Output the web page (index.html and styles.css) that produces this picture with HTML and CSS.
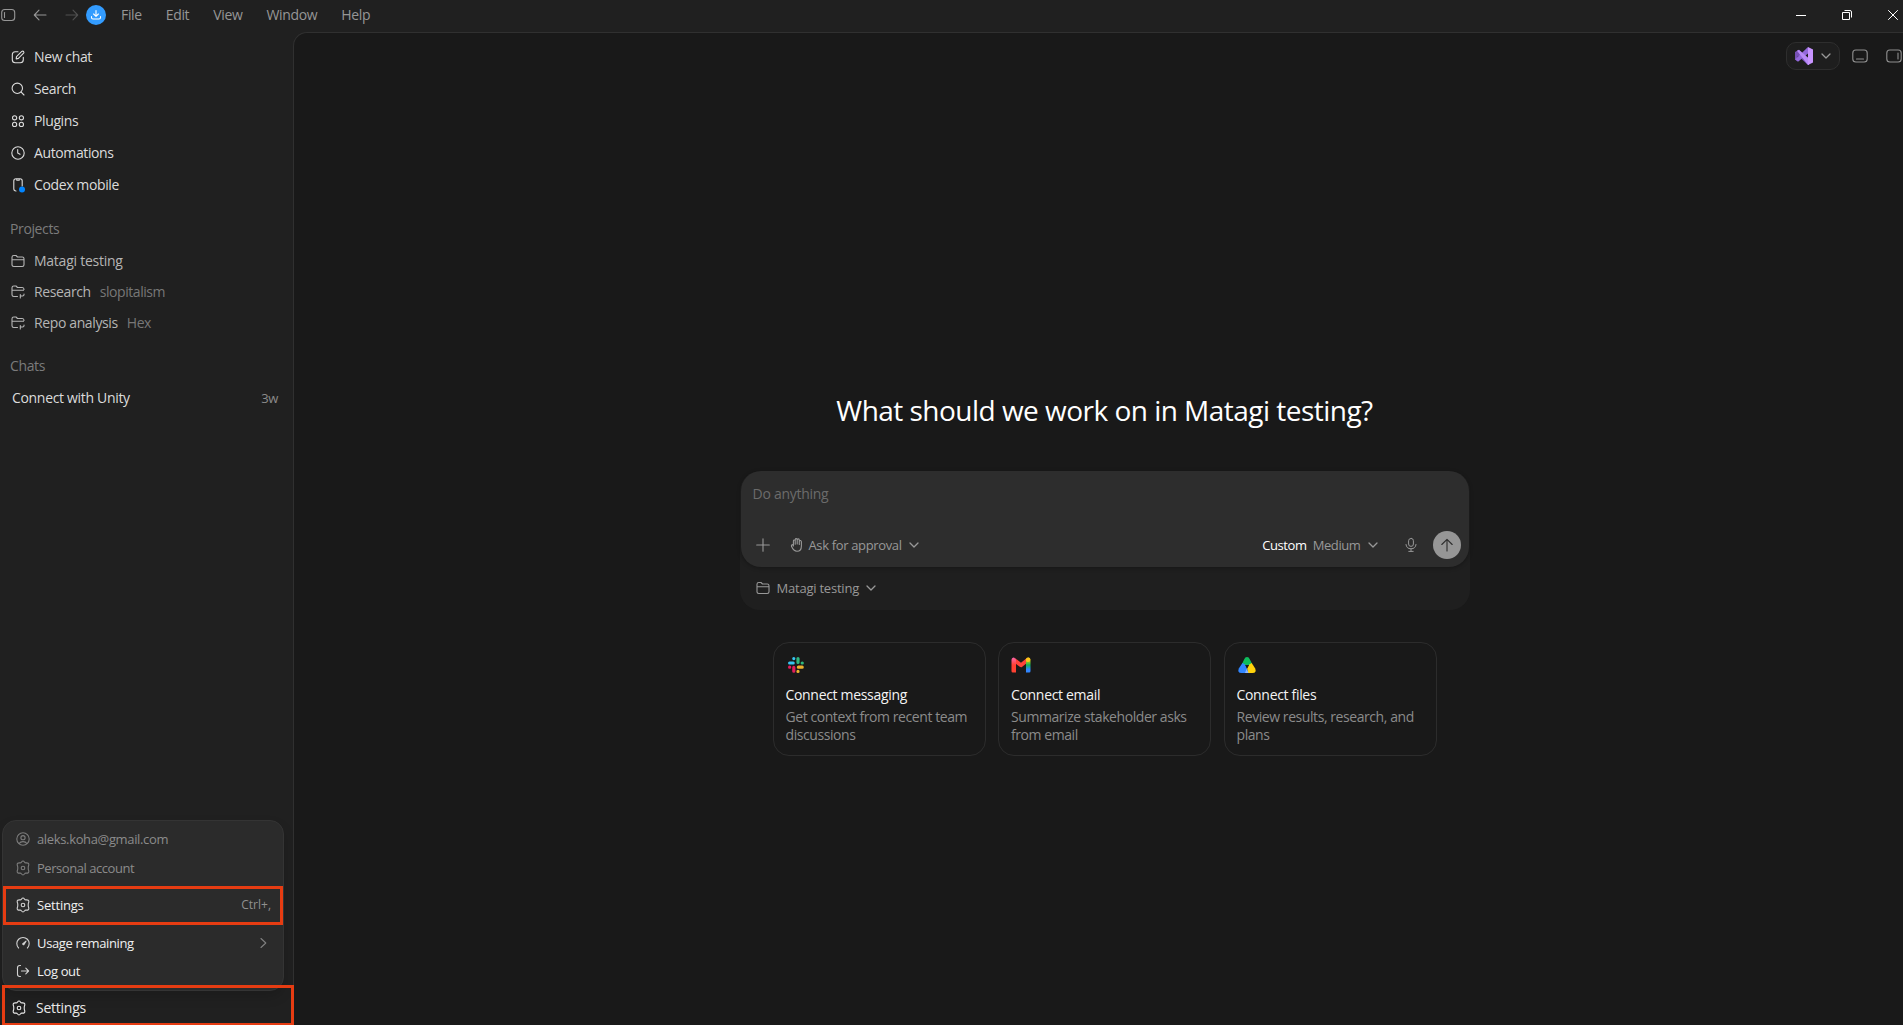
FILE: index.html
```html
<!DOCTYPE html>
<html lang="en">
<head>
    <meta charset="UTF-8">
    <meta name="viewport" content="width=device-width, initial-scale=1.0">
    <title>Codex</title>
    <link rel="stylesheet" href="styles.css">
</head>
<body>
    <!-- Shared icons -->
    <svg class="sprite" aria-hidden="true">
        <symbol id="gear" viewBox="0 0 16 16">
            <path d="M6.4 2.2 Q8 -.2 9.6 2.2 Q10 3 11 2.9 Q14.2 2.6 13.8 5 Q13.2 6.2 13.2 8 Q13.2 9.8 13.8 11 Q14.2 13.4 11 13.1 Q10 13 9.6 13.8 Q8 16.2 6.4 13.8 Q6 13 5 13.1 Q1.8 13.4 2.2 11 Q2.8 9.8 2.8 8 Q2.8 6.2 2.2 5 Q1.8 2.6 5 2.9 Q6 3 6.4 2.2 Z"/>
            <circle cx="8" cy="8" r="1.8"/>
        </symbol>
        <symbol id="folder" viewBox="0 0 16 16">
            <path d="M2 12 V4.3 Q2 2.5 3.8 2.5 H6 L7.5 4 H12.3 Q14 4 14 5.8 V11.8 Q14 13.5 12.3 13.5 H3.7 Q2 13.5 2 11.8 M2 6.8 H14"/>
        </symbol>
        <symbol id="folder-branch" viewBox="0 0 16 16">
            <path d="M7.5 12.5 H3.7 Q2 12.5 2 10.8 V3.8 Q2 2 3.8 2 H6 L7.5 3.5 H12.3 Q14 3.5 14 5.5 M2 6.3 H13.5 M10.3 10.5 V14 M14 10 V10.8 Q14 12 12.5 12 H10.5"/>
        </symbol>
        <symbol id="chevron" viewBox="0 0 12 12">
            <path d="M2 4 L6 8 L10 4"/>
        </symbol>
    </svg>

    <header class="titlebar">
        <svg class="icon" viewBox="0 0 16 16"><rect x="1.7" y="2.5" width="13" height="11" rx="3"/><path d="M4.5 5.5 V10.5"/></svg>
        <svg class="icon tb-back" viewBox="0 0 16 16"><path d="M14 8 H2.5 M7 3.2 L2.3 8 L7 12.8"/></svg>
        <svg class="icon tb-forward" viewBox="0 0 16 16"><path d="M2 8 H13.5 M9 3.2 L13.7 8 L9 12.8"/></svg>
        <span class="update">
            <svg class="icon" viewBox="0 0 12 12"><path d="M6 1.5 V7 M3.6 5 L6 7.3 L8.4 5 M1.5 7.5 V8.5 Q1.5 10 3 10 H9 Q10.5 10 10.5 8.5 V7.5"/></svg>
        </span>
        <nav class="menu">
            <span>File</span>
            <span>Edit</span>
            <span>View</span>
            <span>Window</span>
            <span>Help</span>
        </nav>
        <div class="window-controls">
            <svg viewBox="0 0 12 12"><path d="M1 6.5 H11"/></svg>
            <svg viewBox="0 0 12 12"><path d="M1.5 3.5 H8.5 V10.5 H1.5 Z M3.5 1.5 H9 Q10.5 1.5 10.5 3 V8.5"/></svg>
            <svg viewBox="0 0 12 12"><path d="M1.2 1.2 L10.8 10.8 M10.8 1.2 L1.2 10.8"/></svg>
        </div>
    </header>

    <div class="app">
        <aside class="sidebar">
            <nav class="nav">
                <a class="nav-item">
                    <svg class="icon" viewBox="0 0 16 16"><path d="M8 2.7 H5.3 Q2.3 2.7 2.3 5.7 V10.8 Q2.3 13.8 5.3 13.8 H10.3 Q13.3 13.8 13.3 10.8 V8.3 M6.2 9.9 L6.5 7.6 L11.8 2.4 Q12.8 1.7 13.6 2.5 Q14.3 3.3 13.6 4.2 L8.4 9.4 Z"/></svg>
                    <span>New chat</span>
                </a>
                <a class="nav-item">
                    <svg class="icon" viewBox="0 0 16 16"><circle cx="7.3" cy="7.3" r="5.2"/><path d="M11.2 11.2 L14 14"/></svg>
                    <span>Search</span>
                </a>
                <a class="nav-item">
                    <svg class="icon" viewBox="0 0 16 16"><circle cx="4.6" cy="4.8" r="2.1"/><circle cx="11.4" cy="4.8" r="2.1"/><circle cx="4.6" cy="11.4" r="2.1"/><circle cx="11.4" cy="11.4" r="2.1"/></svg>
                    <span>Plugins</span>
                </a>
                <a class="nav-item">
                    <svg class="icon" viewBox="0 0 16 16"><circle cx="8" cy="8" r="6.2"/><path d="M7.7 4.5 V8 L10 9.3"/></svg>
                    <span>Automations</span>
                </a>
                <a class="nav-item">
                    <svg class="icon" viewBox="0 0 16 16"><path d="M6 14 Q3.8 14 3.8 11.8 V3.8 Q3.8 1.7 6 1.7 H10 Q12.2 1.7 12.2 3.8 V9 M6.8 1.9 V3.3 H9.2 V1.9"/><circle class="dot" cx="12" cy="12.4" r="3"/></svg>
                    <span>Codex mobile</span>
                </a>
            </nav>

            <h2 class="section-title">Projects</h2>
            <div class="project"><svg class="icon"><use href="#folder"/></svg><span class="wide">Matagi testing</span></div>
            <div class="project"><svg class="icon"><use href="#folder-branch"/></svg><span>Research</span><small>slopitalism</small></div>
            <div class="project"><svg class="icon"><use href="#folder-branch"/></svg><span>Repo analysis</span><small>Hex</small></div>

            <h2 class="section-title">Chats</h2>
            <div class="chat"><span>Connect with Unity</span><time>3w</time></div>

            <div class="account-menu">
                <div class="menu-row muted">
                    <svg class="icon" viewBox="0 0 16 16"><circle cx="8" cy="8" r="6.2"/><circle cx="8" cy="6.7" r="2.1"/><path d="M4.2 12.6 Q5.2 10.6 8 10.6 Q10.8 10.6 11.8 12.6"/></svg>
                    <span>aleks.koha@gmail.com</span>
                </div>
                <div class="menu-row muted row-personal">
                    <svg class="icon"><use href="#gear"/></svg>
                    <span>Personal account</span>
                </div>
                <div class="menu-row highlight">
                    <svg class="icon"><use href="#gear"/></svg>
                    <span>Settings</span>
                    <kbd>Ctrl+,</kbd>
                </div>
                <div class="menu-row">
                    <svg class="icon" viewBox="0 0 16 16"><path d="M3.6 13 A6.2 6.2 0 1 1 12.4 13"/><path d="M7.6 9 L11 6.2 L8.8 9.8 Z"/></svg>
                    <span>Usage remaining</span>
                    <svg class="icon caret" viewBox="0 0 12 12"><path d="M4 1.5 L8.8 6 L4 10.5"/></svg>
                </div>
                <div class="menu-row">
                    <svg class="icon" viewBox="0 0 16 16"><path d="M5.5 2.5 H4.7 Q2.5 2.5 2.5 4.7 V11.3 Q2.5 13.5 4.7 13.5 H5.5 M6.5 8 H13.5 M10.8 5.2 L13.6 8 L10.8 10.8"/></svg>
                    <span>Log out</span>
                </div>
            </div>
            <div class="settings-bar">
                <svg class="icon"><use href="#gear"/></svg>
                <span>Settings</span>
            </div>
        </aside>

        <main class="main">
            <div class="toolbar">
                <button class="editor-btn">
                    <svg class="vs" viewBox="0 0 20 20">
                        <path fill="#7650b5" d="M1 6 L4 4.2 L14 13 V19 L4 9.8 L2.8 14.4 L1 13.2 Z"/>
                        <path fill="#9368db" d="M1 13.5 L14 1 V7.5 L4 15.8 Z"/>
                        <path fill="#b889f6" d="M3 4.7 L5 3.8 L15 12.6 V19 L13.8 18.8 Z"/>
                        <path fill="#c894ff" d="M14 1 L19 3.4 V16.5 L14 19 Z"/>
                    </svg>
                    <svg class="icon chev"><use href="#chevron"/></svg>
                </button>
                <svg class="icon panel-icon" viewBox="0 0 18 16"><rect x="1.8" y="2" width="14.4" height="12" rx="3"/><path d="M5.5 11 H12.5"/></svg>
                <svg class="icon panel-icon" viewBox="0 0 18 16"><rect x="1.8" y="2" width="14.4" height="12" rx="3"/><path d="M13 5 V11"/></svg>
            </div>

            <div class="home">
                <h1>What should we work on in Matagi testing?</h1>
                <div class="composer-wrap">
                    <div class="composer">
                        <div class="placeholder">Do anything</div>
                        <div class="composer-row">
                            <svg class="icon plus" viewBox="0 0 16 16"><path d="M8 1.7 V14.3 M1.7 8 H14.3"/></svg>
                            <svg class="icon hand" viewBox="0 0 16 16"><path d="M4.4 9 V4 Q4.5 2.8 5.4 3 Q6.2 3.1 6.2 4 V7.2 M6.2 4 V2.6 Q6.4 1.5 7.3 1.6 Q8.2 1.7 8.2 2.7 V7 M8.2 3 Q8.4 1.8 9.3 1.9 Q10.3 2 10.3 3 V7.4 M10.3 4.3 Q10.6 3.3 11.5 3.5 Q12.4 3.8 12.4 4.7 V9 Q12.4 14.3 8 14.3 Q4.6 14.3 2.5 9.3 Q2.1 8 3 7.7 Q3.8 7.5 4.4 9"/></svg>
                            <span class="tight">Ask for approval</span>
                            <svg class="icon chev"><use href="#chevron"/></svg>
                            <div class="composer-right">
                                <span class="model">Custom</span>
                                <span>Medium</span>
                                <svg class="icon chev"><use href="#chevron"/></svg>
                                <svg class="icon mic" viewBox="0 0 16 16"><rect x="5.6" y="1.4" width="4.8" height="8" rx="2.4"/><path d="M3 7.5 Q3.4 11.8 8 11.8 Q12.6 11.8 13 7.5 M8 12 V14.3 M5.8 14.4 H10.2"/></svg>
                                <button class="send"><svg class="icon" viewBox="0 0 16 16"><path d="M8 14 V2.5 M2.8 7.5 L8 2.3 L13.2 7.5"/></svg></button>
                            </div>
                        </div>
                    </div>
                    <div class="project-row">
                        <svg class="icon"><use href="#folder"/></svg>
                        <span>Matagi testing</span>
                        <svg class="icon chev"><use href="#chevron"/></svg>
                    </div>
                </div>

                <div class="cards">
                    <div class="card">
                        <svg class="brand" viewBox="0 0 20 20">
                            <g stroke-width="3.2" stroke-linecap="round">
                                <path stroke="#36c5f0" d="M3.6 8 H7.2 M7.8 3.5 V3.6"/>
                                <path stroke="#2eb67d" d="M12 3.6 V7.5 M16.2 8 H16.3"/>
                                <path stroke="#e01e5a" d="M7.8 12.4 V16.2 M3.6 12.2 H3.7"/>
                                <path stroke="#ecb22e" d="M12.4 12.2 H16.2 M12 16.3 V16.4"/>
                            </g>
                        </svg>
                        <h3>Connect messaging</h3>
                        <p>Get context from recent team<br>discussions</p>
                    </div>
                    <div class="card">
                        <svg class="brand" viewBox="0 0 20 20">
                            <defs>
                                <linearGradient id="gmail-left" x1="0" y1="0" x2="0" y2="1"><stop offset="0" stop-color="#fb68b0"/><stop offset=".5" stop-color="#ff4132"/></linearGradient>
                                <linearGradient id="gmail-right" x1="0" y1="0" x2="0" y2="1"><stop offset=".1" stop-color="#ffd000"/><stop offset=".5" stop-color="#10b25a"/><stop offset=".8" stop-color="#3186ff"/></linearGradient>
                            </defs>
                            <path fill="none" stroke="#ff4339" stroke-width="4" stroke-linejoin="round" d="M3 4.8 L10 10.3 L16.2 5.2"/>
                            <path fill="url(#gmail-left)" d="M.5 5 Q.5 2.5 3 2.5 L5 4.5 V17.5 H1.8 Q.5 17.5 .5 16 Z"/>
                            <path fill="url(#gmail-right)" d="M19.5 5 Q19.5 2.5 17 2.5 L15 4.5 V17.5 H18.2 Q19.5 17.5 19.5 16 Z"/>
                            <circle cx="17" cy="4.7" r="2.2" fill="#ffc51b"/>
                        </svg>
                        <h3>Connect email</h3>
                        <p>Summarize stakeholder asks<br>from email</p>
                    </div>
                    <div class="card">
                        <svg class="brand" viewBox="0 0 20 20">
                            <path fill="#0fbc5c" d="M5 8.9 L7.1 4.4 Q8.1 2 10 2 Q11.9 2 12.9 4.4 L15.2 8.9 L12.2 10.2 H8.2 Z"/>
                            <path fill="#ffd20b" d="M14.7 8 L18.2 13.6 Q20 18 15.5 18 H11 L10 13.8 L12.2 9.5 Z"/>
                            <path fill="#3186ff" d="M5.4 8 L1.8 13.6 Q0 18 4.4 18 H11 L10.2 14 L8.2 9.5 Z"/>
                            <path fill="#91b5ff" d="M9.6 14 L11.6 18 H8 Z"/>
                            <path fill="#191919" d="M8.2 10 H12 L10 13.6 Z"/>
                        </svg>
                        <h3>Connect files</h3>
                        <p>Review results, research, and<br>plans</p>
                    </div>
                </div>
            </div>
        </main>
    </div>
</body>
</html>
```
FILE: styles.css
```css
* {
    margin: 0;
    padding: 0;
    box-sizing: border-box;
}

body {
    width: 100vw;
    height: 100vh;
    overflow: hidden;
    display: flex;
    flex-direction: column;
    background: #202020;
    color: #dcdcdc;
    font-family: "Open Sans", "Noto Sans", sans-serif;
    font-size: 14px;
    line-height: 18px;
    letter-spacing: -0.38px;
    white-space: nowrap;
}

.sprite {
    position: absolute;
    width: 0;
    height: 0;
}

.icon {
    flex: none;
    width: 16px;
    height: 16px;
    fill: none;
    stroke: currentColor;
    stroke-width: 1.1;
    stroke-linecap: round;
    stroke-linejoin: round;
}

.chev {
    width: 12px;
    height: 12px;
    stroke-width: 1.3;
}

/* Title bar */
.titlebar {
    flex: none;
    height: 32px;
    display: flex;
    align-items: center;
    color: #969696;
    padding-bottom: 2px;
}

.tb-back {
    margin-left: 16px;
}

.tb-forward {
    margin-left: 16px;
    color: #505050;
}

.update {
    width: 20px;
    height: 20px;
    margin-left: 6px;
    border-radius: 50%;
    background: #339cff;
    color: white;
    display: flex;
    align-items: center;
    justify-content: center;
}

.update .icon {
    width: 12px;
    height: 12px;
}

.menu {
    display: flex;
    gap: 24px;
    margin-left: 15px;
    letter-spacing: -0.35px;
}

.window-controls {
    display: flex;
    gap: 34px;
    margin-left: auto;
    margin-right: 4px;
}

.window-controls svg {
    width: 12px;
    height: 12px;
    fill: none;
    stroke: white;
    stroke-width: 1;
}

.app {
    flex: 1;
    display: flex;
    min-height: 0;
}

/* Sidebar */
.sidebar {
    flex: none;
    width: 293px;
    display: flex;
    flex-direction: column;
    padding-top: 9px;
    background: #202020;
}

.nav-item {
    height: 32px;
    display: flex;
    align-items: center;
    gap: 8px;
    padding-left: 10px;
}

.dot {
    fill: #0285ff;
    stroke: none;
}

.section-title {
    font-size: 14px;
    font-weight: normal;
    color: #7b7b7b;
    padding-left: 10px;
    margin-top: 19px;
    height: 25px;
}

.project {
    height: 31px;
    display: flex;
    align-items: center;
    gap: 8px;
    padding-left: 10px;
    color: #b5b5b5;
}

.project small {
    font-size: 14px;
    margin-left: 1px;
    color: #777;
    letter-spacing: -0.45px;
}

.wide {
    letter-spacing: -0.25px;
}

.chat {
    height: 32px;
    display: flex;
    justify-content: space-between;
    align-items: center;
    padding: 0 15px 0 12px;
    letter-spacing: -0.32px;
}

.chat time {
    font-size: 13px;
    color: #8b8b8b;
}

.account-menu {
    width: 282px;
    margin: auto 0 0 2px;
    padding-top: 4px;
    height: 171px;
    border: 1px solid #343434;
    border-radius: 14px;
    background: #2b2b2b;
    color: #f0f0f0;
    font-size: 13px;
    letter-spacing: -0.35px;
    box-shadow: 0 6px 12px rgba(0, 0, 0, 0.15);
}

.menu-row {
    height: 28px;
    display: flex;
    align-items: center;
    gap: 6px;
    padding-left: 12px;
}

.menu-row .icon {
    opacity: 0.85;
}

.row-personal {
    height: 29px;
    letter-spacing: -0.45px;
}

.muted {
    color: #8b8b8b;
}

.highlight {
    height: 39px;
    margin: 4px 0;
    padding: 0 9px 1px;
    border: 3px solid #e63c12;
    letter-spacing: -0.2px;
}

.highlight kbd {
    margin-left: auto;
    font: inherit;
    font-size: 12px;
    letter-spacing: 0;
    color: #909090;
}

.caret {
    width: 12px;
    height: 12px;
    margin-left: auto;
    margin-right: 14px;
    color: #909090;
}

/* Sits over the lower edge of the account menu */
.settings-bar {
    position: relative;
    flex: none;
    height: 41px;
    margin: -6px -1px -1px 2px;
    display: flex;
    align-items: center;
    gap: 9px;
    padding: 5px 0 0 6px;
    border: 3px solid #e63c12;
    color: #e8e8e8;
    letter-spacing: -0.25px;
}

/* Main area */
.main {
    flex: 1;
    display: flex;
    flex-direction: column;
    padding-left: 12px;
    background: #191919;
    border: solid #303030;
    border-width: 1px 0 0 1px;
    border-radius: 14px 0 0 0;
}

.toolbar {
    display: flex;
    align-items: center;
    justify-content: flex-end;
    gap: 16px;
    padding-top: 9px;
}

.editor-btn {
    width: 54px;
    height: 28px;
    display: flex;
    align-items: center;
    gap: 6px;
    padding-left: 7px;
    margin-right: -5px;
    border: 1px solid #2e2e2e;
    border-radius: 10px;
    background: #1e1e1e;
    color: #999;
}

.vs {
    width: 20px;
    height: 20px;
}

.panel-icon {
    width: 18px;
    color: #909090;
}

.home {
    width: 730px;
    margin: 320px auto 0;
}

h1 {
    font-size: 28px;
    line-height: 40px;
    font-weight: normal;
    letter-spacing: -0.52px;
    text-align: center;
    color: white;
}

.composer-wrap {
    margin-top: 41px;
    height: 139px;
    border-radius: 20px;
    background: #1f1f1f;
    font-size: 13px;
    letter-spacing: -0.22px;
}

.composer {
    height: 96px;
    margin: 0 1px;
    border-radius: 20px;
    background: #2d2d2d;
    box-shadow: 0 1px 4px rgba(0, 0, 0, 0.3);
    padding: 14px 8px 0 12px;
}

.placeholder {
    font-size: 14px;
    letter-spacing: -0.28px;
    color: #6b6b6b;
}

.composer-row {
    display: flex;
    align-items: center;
    height: 28px;
    margin-top: 28px;
    color: #989898;
}

.plus {
    margin-left: 2px;
}

.hand {
    margin: 0 4px 0 18px;
}

.tight {
    letter-spacing: -0.35px;
}

.composer-row > .chev, .project-row .chev {
    margin-left: 6px;
}

.composer-right {
    display: flex;
    align-items: center;
    margin-left: auto;
    letter-spacing: -0.4px;
}

.model {
    color: white;
    margin-right: 6px;
}

.composer-right .chev {
    margin-left: 6px;
}

.mic {
    margin: 0 14px 0 24px;
    stroke-width: 1;
}

.send {
    width: 28px;
    height: 28px;
    border: none;
    border-radius: 50%;
    background: #969696;
    color: #2d2d2d;
    display: flex;
    align-items: center;
    justify-content: center;
}

.project-row {
    display: flex;
    align-items: center;
    height: 42px;
    padding-left: 15px;
    color: #989898;
}

.project-row span {
    margin-left: 6px;
}

.cards {
    display: grid;
    grid-template-columns: repeat(3, 213px);
    justify-content: center;
    gap: 12.5px;
    margin-top: 32px;
    letter-spacing: -0.43px;
}

.card {
    height: 114px;
    padding: 12px;
    border: 1px solid #2c2c2c;
    border-radius: 16px;
}

.brand {
    display: block;
    width: 20px;
    height: 20px;
    fill: none;
}

.card h3 {
    font-size: 14px;
    font-weight: normal;
    color: #f4f4f4;
    line-height: 18px;
    margin-top: 11px;
    letter-spacing: -0.32px;
}

.card p {
    color: #8b8b8b;
    margin-top: 4px;
}
```
